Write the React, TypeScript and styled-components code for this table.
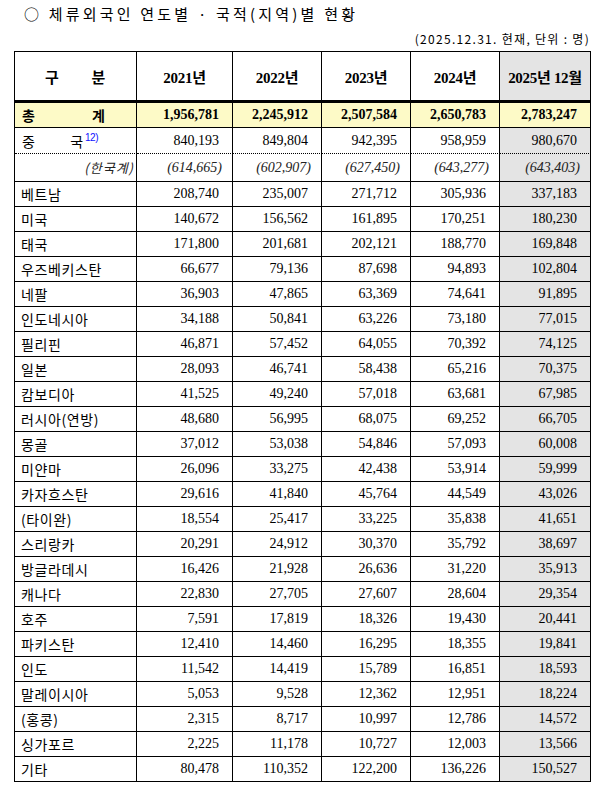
import React from "react";
import styled, { createGlobalStyle, css } from "styled-components";

const GlobalStyle = createGlobalStyle`
  html, body { margin: 0; padding: 0; background: #ffffff; }
  body {
    font-family: "Noto Sans CJK KR", "Noto Sans", sans-serif;
    color: #000000;
  }
`;

const Page = styled.div`
  width: 605px;
  box-sizing: border-box;
  padding: 0 14px 14px 14px;
`;

const Title = styled.h1`
  margin: 0;
  padding: 4px 0 0 10px;
  height: 28px;
  box-sizing: border-box;
  font-family: "Noto Sans CJK KR", sans-serif;
  font-weight: 400;
  font-size: 15px;
  line-height: 20px;
  letter-spacing: 3.2px;
  white-space: nowrap;
`;

const Unit = styled.div`
  height: 23px;
  padding-right: 1px;
  text-align: right;
  font-family: "Noto Sans CJK KR", sans-serif;
  font-size: 12px;
  line-height: 22px;
  letter-spacing: 1.3px;
  white-space: nowrap;
`;

const Table = styled.table`
  border-collapse: separate;
  border-spacing: 0;
  table-layout: fixed;
  width: 577px;
  border-top: 1px solid #000;
  border-left: 1px solid #000;
`;

type RowKind = "head" | "total" | "china" | "korean" | "normal";

const rowHeights: Record<RowKind, number> = {
  head: 51,
  total: 25,
  china: 26,
  korean: 28,
  normal: 25,
};

const Cell = styled.td<{ $kind: RowKind; $gray?: boolean }>`
  box-sizing: border-box;
  height: ${(p) => rowHeights[p.$kind]}px;
  padding: 0;
  border-right: 1px solid #000;
  border-bottom: ${(p) =>
    p.$kind === "head"
      ? "3px solid #000"
      : p.$kind === "china"
      ? "1px dotted #000"
      : "1px solid #000"};
  background: ${(p) =>
    p.$kind === "total" ? "#fdfac7" : p.$gray ? "#e4e4e4" : "#ffffff"};
  vertical-align: middle;
  white-space: nowrap;
  overflow: visible;
`;

const LabelCell = styled(Cell)`
  padding-left: 6px;
  font-family: "Noto Sans CJK KR", sans-serif;
  font-size: 14px;
  line-height: 16px;
  letter-spacing: 0.6px;
`;

const NumCell = styled(Cell)<{ $bold?: boolean; $italic?: boolean }>`
  text-align: right;
  padding-right: ${(p) => (p.$italic ? 10 : 13)}px;
  font-family: "Liberation Serif", "Noto Sans CJK KR", serif;
  font-size: 14px;
  line-height: 16px;
  ${(p) =>
    p.$bold &&
    css`
      font-weight: 700;
    `}
  ${(p) =>
    p.$italic &&
    css`
      font-style: italic;
      color: #222;
    `}
`;

const HeadCell = styled(Cell)`
  text-align: center;
  font-family: "Liberation Serif", "Noto Sans CJK KR", serif;
  font-weight: 700;
  font-size: 15px;
  letter-spacing: -0.3px;
`;

const Spread = styled.div<{ $left: number; $right: number; $bold?: boolean; $size?: number }>`
  display: flex;
  justify-content: space-between;
  align-items: center;
  padding: 0 ${(p) => p.$right}px 0 ${(p) => p.$left}px;
  font-family: "Noto Sans CJK KR", sans-serif;
  font-size: ${(p) => p.$size ?? 14}px;
  font-weight: ${(p) => (p.$bold ? 700 : 400)};
`;

const ItalicLabel = styled.div`
  text-align: right;
  padding-right: 2px;
  font-family: "Noto Sans CJK KR", sans-serif;
  font-style: italic;
  font-size: 13px;
  letter-spacing: 1px;
  color: #222;
`;

const Note = styled.sup`
  font-family: "Liberation Sans", sans-serif;
  font-size: 10px;
  color: #1010ff;
  line-height: 0;
  vertical-align: 6px;
  margin-left: 2px;
  letter-spacing: -0.5px;
`;

const widths = [122, 96, 89, 89, 89, 91];

const years = ["2021년", "2022년", "2023년", "2024년", "2025년 12월"];

const total = ["1,956,781", "2,245,912", "2,507,584", "2,650,783", "2,783,247"];
const china = ["840,193", "849,804", "942,395", "958,959", "980,670"];
const korean = ["(614,665)", "(602,907)", "(627,450)", "(643,277)", "(643,403)"];

const rows: [string, string, string, string, string, string][] = [
  ["베트남", "208,740", "235,007", "271,712", "305,936", "337,183"],
  ["미국", "140,672", "156,562", "161,895", "170,251", "180,230"],
  ["태국", "171,800", "201,681", "202,121", "188,770", "169,848"],
  ["우즈베키스탄", "66,677", "79,136", "87,698", "94,893", "102,804"],
  ["네팔", "36,903", "47,865", "63,369", "74,641", "91,895"],
  ["인도네시아", "34,188", "50,841", "63,226", "73,180", "77,015"],
  ["필리핀", "46,871", "57,452", "64,055", "70,392", "74,125"],
  ["일본", "28,093", "46,741", "58,438", "65,216", "70,375"],
  ["캄보디아", "41,525", "49,240", "57,018", "63,681", "67,985"],
  ["러시아(연방)", "48,680", "56,995", "68,075", "69,252", "66,705"],
  ["몽골", "37,012", "53,038", "54,846", "57,093", "60,008"],
  ["미얀마", "26,096", "33,275", "42,438", "53,914", "59,999"],
  ["카자흐스탄", "29,616", "41,840", "45,764", "44,549", "43,026"],
  ["(타이완)", "18,554", "25,417", "33,225", "35,838", "41,651"],
  ["스리랑카", "20,291", "24,912", "30,370", "35,792", "38,697"],
  ["방글라데시", "16,426", "21,928", "26,636", "31,220", "35,913"],
  ["캐나다", "22,830", "27,705", "27,607", "28,604", "29,354"],
  ["호주", "7,591", "17,819", "18,326", "19,430", "20,441"],
  ["파키스탄", "12,410", "14,460", "16,295", "18,355", "19,841"],
  ["인도", "11,542", "14,419", "15,789", "16,851", "18,593"],
  ["말레이시아", "5,053", "9,528", "12,362", "12,951", "18,224"],
  ["(홍콩)", "2,315", "8,717", "10,997", "12,786", "14,572"],
  ["싱가포르", "2,225", "11,178", "10,727", "12,003", "13,566"],
  ["기타", "80,478", "110,352", "122,200", "136,226", "150,527"],
];

export default function App() {
  return (
    <>
      <GlobalStyle />
      <Page>
        <Title>○ 체류외국인 연도별 · 국적(지역)별 현황</Title>
        <Unit>(2025.12.31. 현재, 단위 : 명)</Unit>
        <Table>
          <colgroup>
            {widths.map((w, i) => (
              <col key={i} style={{ width: w }} />
            ))}
          </colgroup>
          <thead>
            <tr>
              <HeadCell $kind="head">
                <Spread $left={30} $right={31} $bold $size={15}>
                  <span>구</span>
                  <span>분</span>
                </Spread>
              </HeadCell>
              {years.map((y, i) => (
                <HeadCell key={y} $kind="head" $gray={i === 4}>
                  {y}
                </HeadCell>
              ))}
            </tr>
          </thead>
          <tbody>
            <tr>
              <Cell $kind="total">
                <Spread $left={7} $right={31} $bold>
                  <span>총</span>
                  <span>계</span>
                </Spread>
              </Cell>
              {total.map((v) => (
                <NumCell key={v} $kind="total" $bold>
                  {v}
                </NumCell>
              ))}
            </tr>
            <tr>
              <Cell $kind="china">
                <Spread $left={7} $right={38}>
                  <span>중</span>
                  <span>
                    국<Note>12)</Note>
                  </span>
                </Spread>
              </Cell>
              {china.map((v, i) => (
                <NumCell key={v} $kind="china" $gray={i === 4}>
                  {v}
                </NumCell>
              ))}
            </tr>
            <tr>
              <Cell $kind="korean">
                <ItalicLabel>(한국계)</ItalicLabel>
              </Cell>
              {korean.map((v, i) => (
                <NumCell key={v} $kind="korean" $italic $gray={i === 4}>
                  {v}
                </NumCell>
              ))}
            </tr>
            {rows.map((r) => (
              <tr key={r[0]}>
                <LabelCell $kind="normal">{r[0]}</LabelCell>
                {r.slice(1).map((v, i) => (
                  <NumCell key={i} $kind="normal" $gray={i === 4}>
                    {v}
                  </NumCell>
                ))}
              </tr>
            ))}
          </tbody>
        </Table>
      </Page>
    </>
  );
}
